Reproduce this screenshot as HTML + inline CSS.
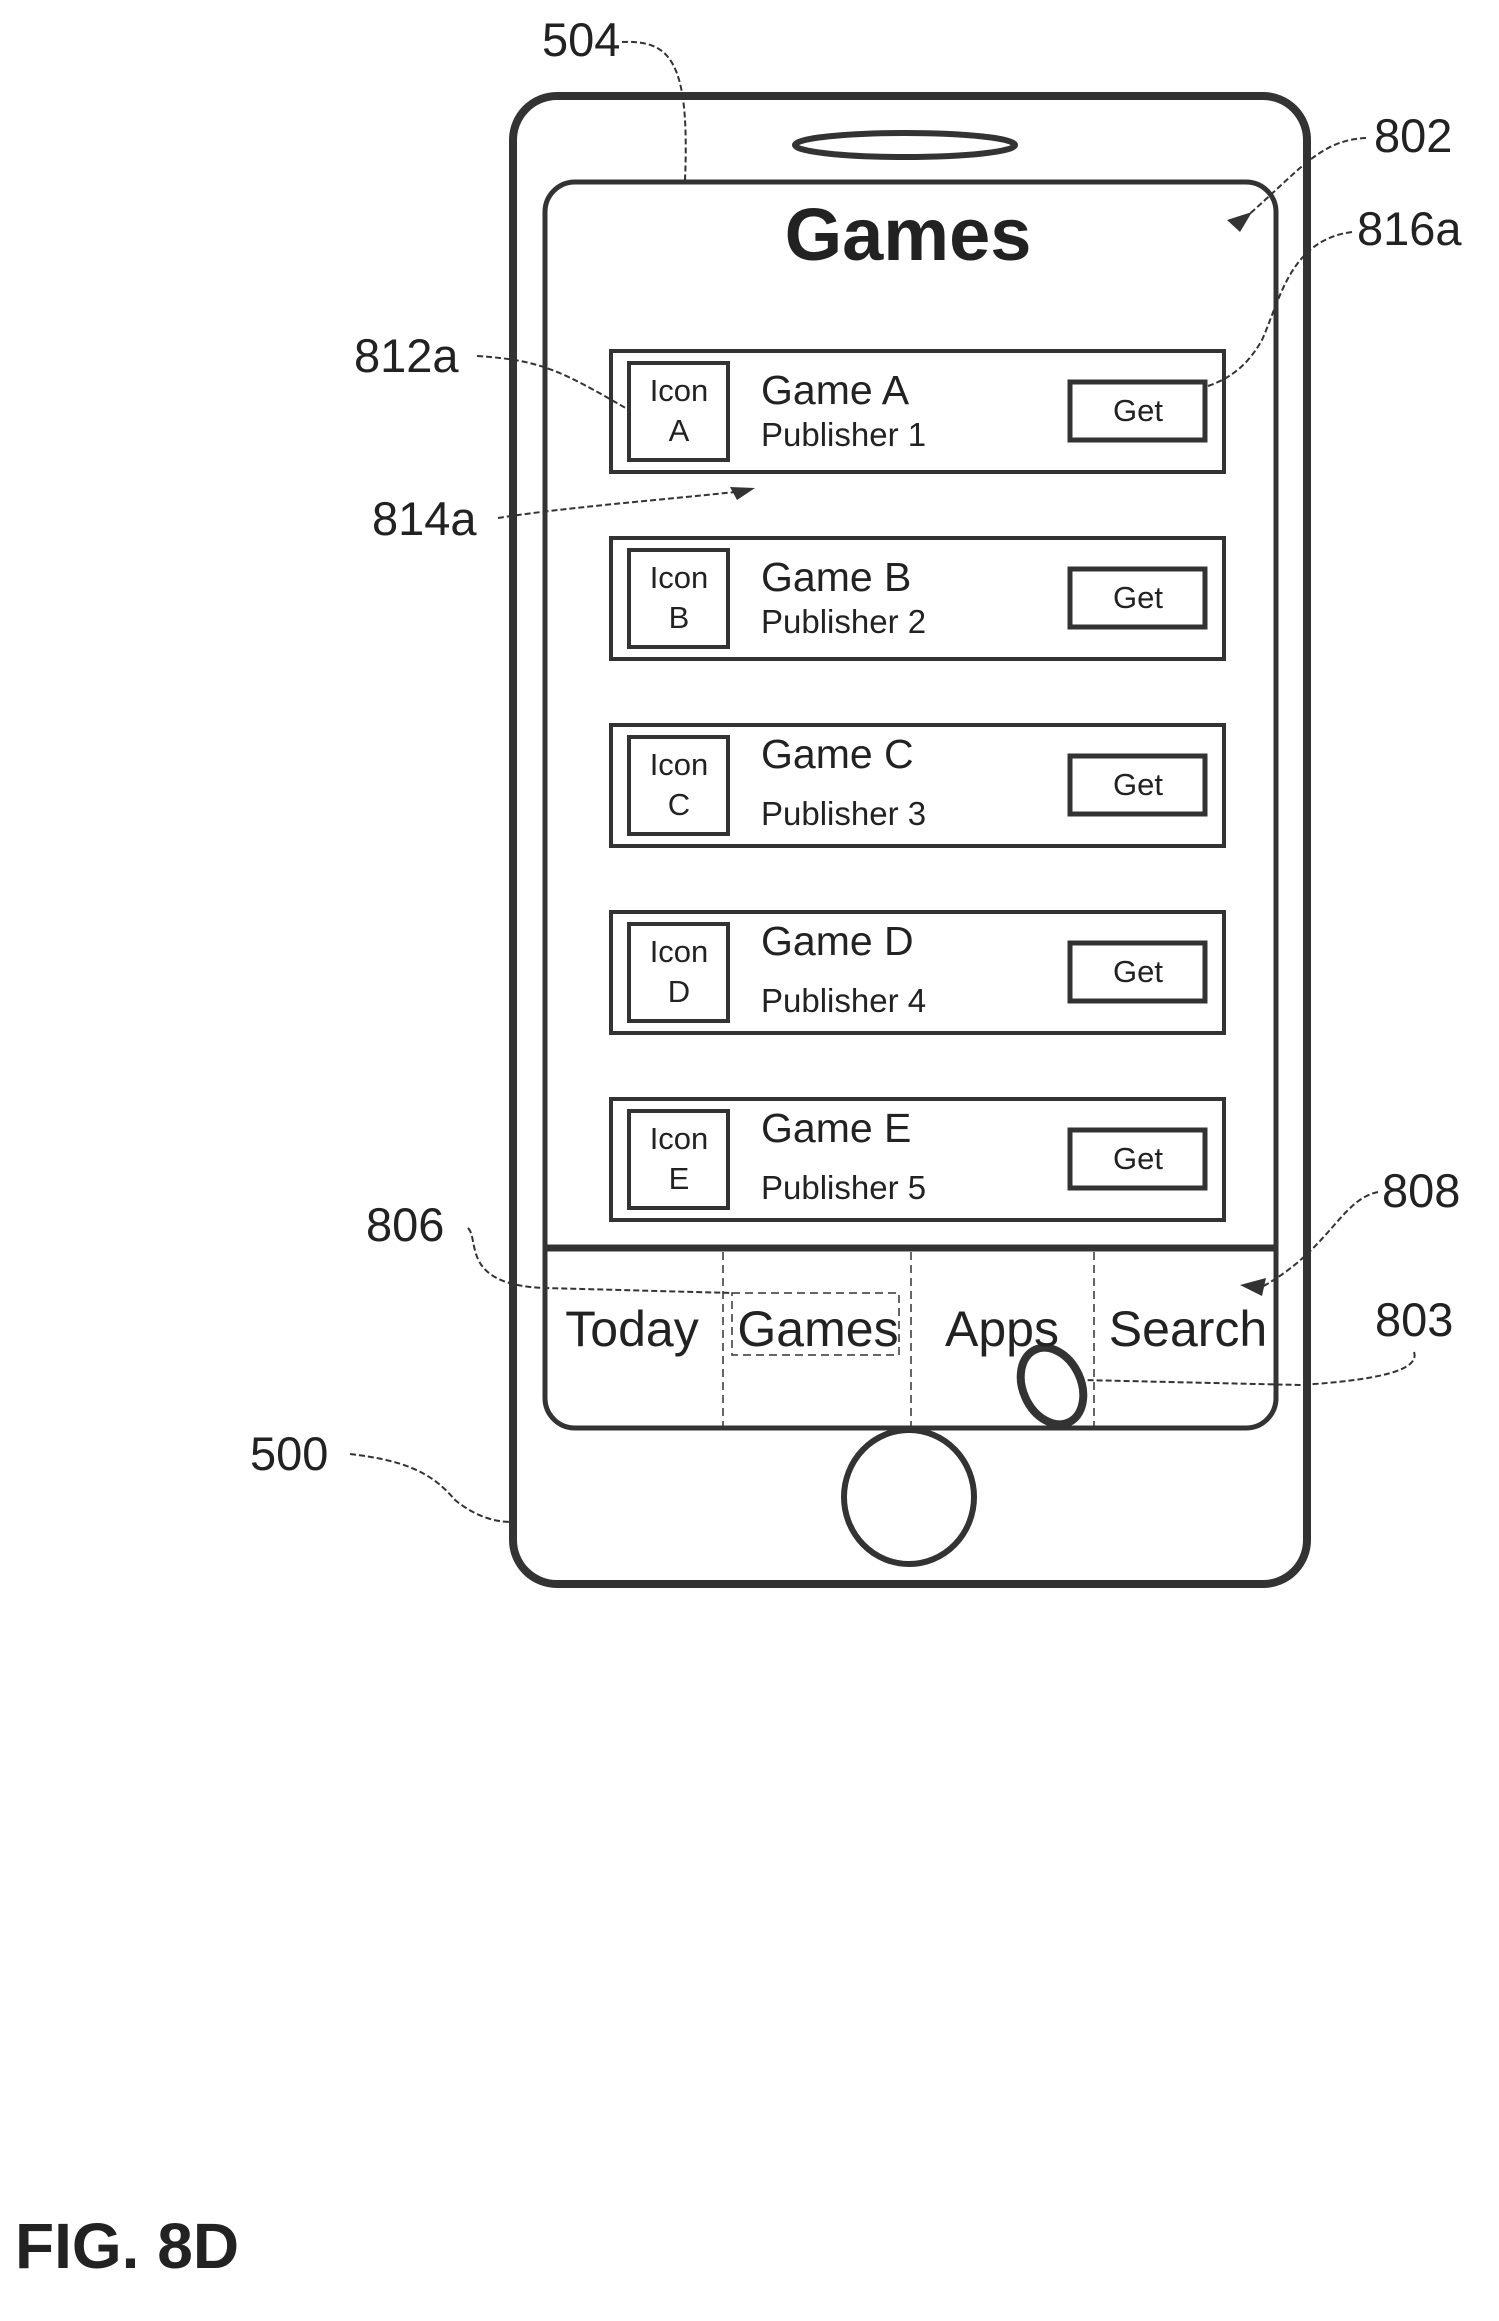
<!DOCTYPE html>
<html><head><meta charset="utf-8"><style>
html,body{margin:0;padding:0;background:#fff}
svg{display:block}
text{font-family:"Liberation Sans",sans-serif;fill:#222}
</style></head><body>
<svg width="1499" height="2321" viewBox="0 0 1499 2321" xmlns="http://www.w3.org/2000/svg">
<g fill="none" stroke="#333">
<rect x="513" y="96" width="794" height="1488" rx="44" stroke-width="8"/>
<ellipse cx="905" cy="145" rx="110" ry="12" stroke-width="6"/>
<rect x="545" y="182" width="731" height="1246" rx="30" stroke-width="5"/>
<line x1="545" y1="1248" x2="1276" y2="1248" stroke-width="7"/>
<g stroke-width="1.5" stroke-dasharray="8,5">
<line x1="723" y1="1252" x2="723" y2="1428"/>
<line x1="911" y1="1252" x2="911" y2="1428"/>
<line x1="1094" y1="1252" x2="1094" y2="1428"/>
<rect x="732" y="1293" width="167" height="62"/>
</g>
<ellipse cx="1052" cy="1386" rx="29" ry="40" transform="rotate(-25 1052 1386)" stroke-width="8"/>
<ellipse cx="909" cy="1497" rx="65" ry="67" stroke-width="6"/>
</g>
<text x="908" y="260" font-size="74" font-weight="bold" text-anchor="middle">Games</text>
<g fill="none" stroke="#333">
<rect x="611" y="351" width="613" height="121" stroke-width="4"/>
<rect x="629" y="363" width="99" height="97" stroke-width="4"/>
<rect x="1070" y="382" width="135" height="58" stroke-width="5"/>
<rect x="611" y="538" width="613" height="121" stroke-width="4"/>
<rect x="629" y="550" width="99" height="97" stroke-width="4"/>
<rect x="1070" y="569" width="135" height="58" stroke-width="5"/>
<rect x="611" y="725" width="613" height="121" stroke-width="4"/>
<rect x="629" y="737" width="99" height="97" stroke-width="4"/>
<rect x="1070" y="756" width="135" height="58" stroke-width="5"/>
<rect x="611" y="912" width="613" height="121" stroke-width="4"/>
<rect x="629" y="924" width="99" height="97" stroke-width="4"/>
<rect x="1070" y="943" width="135" height="58" stroke-width="5"/>
<rect x="611" y="1099" width="613" height="121" stroke-width="4"/>
<rect x="629" y="1111" width="99" height="97" stroke-width="4"/>
<rect x="1070" y="1130" width="135" height="58" stroke-width="5"/>
</g>
<g font-size="31" text-anchor="middle">
<text x="679" y="401">Icon</text><text x="679" y="441">A</text><text x="1138" y="421">Get</text>
<text x="679" y="588">Icon</text><text x="679" y="628">B</text><text x="1138" y="608">Get</text>
<text x="679" y="775">Icon</text><text x="679" y="815">C</text><text x="1138" y="795">Get</text>
<text x="679" y="962">Icon</text><text x="679" y="1002">D</text><text x="1138" y="982">Get</text>
<text x="679" y="1149">Icon</text><text x="679" y="1189">E</text><text x="1138" y="1169">Get</text>
</g>
<g font-size="41">
<text x="761" y="404">Game A</text>
<text x="761" y="591">Game B</text>
<text x="761" y="768">Game C</text>
<text x="761" y="955">Game D</text>
<text x="761" y="1142">Game E</text>
</g>
<g font-size="33">
<text x="761" y="446">Publisher 1</text>
<text x="761" y="633">Publisher 2</text>
<text x="761" y="825">Publisher 3</text>
<text x="761" y="1012">Publisher 4</text>
<text x="761" y="1199">Publisher 5</text>
</g>
<g font-size="50" text-anchor="middle">
<text x="632" y="1346">Today</text>
<text x="818" y="1346">Games</text>
<text x="1002" y="1346">Apps</text>
<text x="1188" y="1346">Search</text>
</g>
<g font-size="47">
<text x="542" y="56">504</text>
<text x="1374" y="152">802</text>
<text x="1357" y="245">816a</text>
<text x="354" y="372">812a</text>
<text x="372" y="535">814a</text>
<text x="1382" y="1207">808</text>
<text x="366" y="1241">806</text>
<text x="1375" y="1336">803</text>
<text x="250" y="1470">500</text>
</g>
<g fill="none" stroke="#333" stroke-width="2" stroke-dasharray="6,3">
<path d="M622 42 C670 40 690 60 685 180"/>
<path d="M1366 138 C1320 140 1300 170 1245 218"/>
<path d="M1352 232 C1290 240 1280 300 1262 340 C1245 370 1225 380 1208 386"/>
<path d="M477 356 C540 360 560 370 629 410"/>
<path d="M498 518 C560 508 660 500 735 492"/>
<path d="M1378 1192 C1340 1200 1330 1250 1260 1288"/>
<path d="M468 1228 C480 1240 460 1285 545 1288 L732 1293"/>
<path d="M1414 1352 C1420 1370 1380 1380 1300 1385 L1082 1380"/>
<path d="M350 1454 C400 1460 430 1470 455 1500 C480 1520 500 1522 513 1522"/>
</g>
<g fill="#333">
<polygon points="1227,220 1252,212 1240,232"/>
<polygon points="730,487 755,488 737,500"/>
<polygon points="1240,1285 1266,1278 1262,1296"/>
</g>
<text x="15" y="2268" font-size="64" font-weight="bold">FIG. 8D</text>
</svg>
</body></html>
